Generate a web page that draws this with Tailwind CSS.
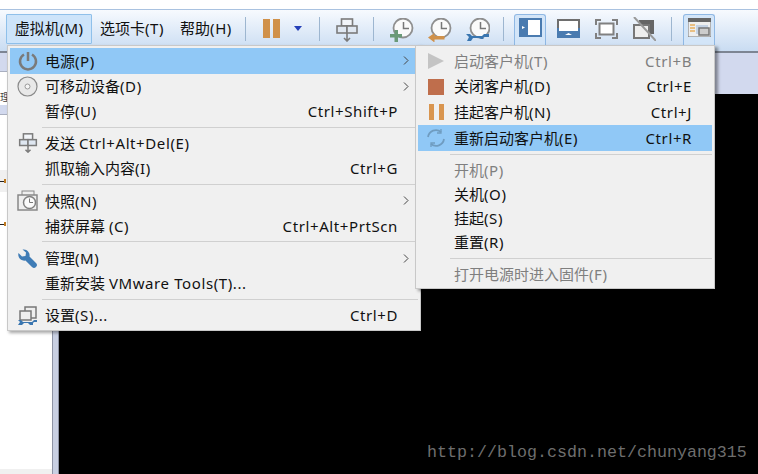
<!DOCTYPE html>
<html lang="zh-CN">
<head>
  <meta charset="UTF-8" />
  <title>VMware menu</title>
  <script src="https://cdn.jsdelivr.net/npm/@tailwindcss/browser@4"></script>
</head>
<body class="w-[758px] h-[474px] overflow-hidden bg-white font-['Noto_Sans','Noto_Sans_CJK_SC',sans-serif] text-[15px] text-[#111]">
<div class="relative w-[758px] h-[474px] flex flex-col">

  <!-- title strip -->
  <div class="h-[9px] bg-white border-b border-[#a9c2e0] box-content"></div>

  <!-- toolbar -->
  <div class="h-[43px] flex items-center pl-[6px] bg-gradient-to-b from-[#f7fafe] to-[#c9dcf2] border-b-2 border-[#7d8593]">
    <div class="h-[30px] w-[86px] flex items-center justify-center border border-[#8fc0ea] bg-[#cde4fa] rounded-[1px] mt-[-4px]"><span>虚拟机<span class="tracking-[.3px]">(M)</span></span></div>
    <div class="w-[80px] text-center mt-[-4px]">选项卡<span class="tracking-[.6px]">(T)</span></div>
    <div class="w-[68px] text-center mt-[-4px]">帮助<span class="tracking-[.6px]">(H)</span></div>
    <div class="w-px h-[24px] bg-[#9db6d0] mt-[-4px] ml-[5px]"></div>
    <div class="flex gap-[3px] ml-[17px] mt-[-4px]">
      <div class="w-[7px] h-[19px] bg-[#d0914a]"></div>
      <div class="w-[7px] h-[19px] bg-[#d0914a]"></div>
    </div>
    <svg class="ml-[14px] mt-[-4px]" width="8" height="5" viewBox="0 0 8 5"><path d="M0 0h8L4 5z" fill="#2540b8"/></svg>
    <div class="w-px h-[24px] bg-[#9db6d0] mt-[-4px] ml-[17px]"></div>
    <svg class="ml-[16px] mt-[-1px]" width="22" height="24" viewBox="0 0 22 24" fill="#f2f5f9" stroke="#7b7b7b" stroke-width="1.600"><rect x="5.500" y="1" width="11" height="7"/><rect x="1" y="8" width="10" height="7" fill="#dfe7f1"/><rect x="11" y="8" width="10" height="7" fill="#dfe7f1"/><path d="M11 15v8M8 20l3 3 3-3" fill="none"/></svg>
    <div class="w-px h-[24px] bg-[#9db6d0] mt-[-4px] ml-[15px]"></div>
    <div class="flex gap-[14px] ml-[16px] mt-[-1px]">
      <svg width="24" height="24" viewBox="0 0 24 24"><circle cx="13" cy="10" r="9.500" fill="#fafafa" stroke="#8f8f8f" stroke-width="1.800"/><path d="M13.500 4v6.500H19" fill="none" stroke="#777" stroke-width="1.500"/><path d="M4.500 12h3.500v4h4v3.500H8v4.500H4.500v-4.500H0V16h4.500z" fill="#6a9a78"/></svg>
      <svg width="24" height="24" viewBox="0 0 24 24"><circle cx="13" cy="10" r="9.500" fill="#fafafa" stroke="#8f8f8f" stroke-width="1.800"/><path d="M13.500 4v6.500H19" fill="none" stroke="#777" stroke-width="1.500"/><path d="M0 19.500l6.500-4.500v3h10v3.500h-10v3z" fill="#d0914a"/></svg>
      <svg width="24" height="24" viewBox="0 0 24 24"><circle cx="14" cy="10" r="9.500" fill="#fafafa" stroke="#8f8f8f" stroke-width="1.800"/><path d="M14.500 4v6.500H20" fill="none" stroke="#777" stroke-width="1.500"/><path d="M0 16h4l2 2h10l2-2h5v3h-5l-1 1 1 1h-3l-2-1H7l-2 3H1l2-4z" fill="#3a76b0"/></svg>
    </div>
    <div class="w-px h-[24px] bg-[#9db6d0] mt-[-4px] ml-[13px]"></div>
    <div class="h-[33px] w-[32px] ml-[10px] mt-[-1px] flex items-center justify-center border border-b-0 border-[#8fb8e4] rounded-t-[3px] bg-[#d3e5f8]">
      <svg class="mt-[-6px]" width="23" height="19" viewBox="0 0 23 19"><rect width="23" height="19" fill="#4a7bb0"/><rect x="9" y="2" width="12" height="15" fill="#fff"/><path d="M3 8l3 1.500-3 1.500z" fill="#fff"/></svg>
    </div>
    <div class="flex gap-[15px] ml-[11px] mt-[-4px] items-center">
      <svg width="23" height="19" viewBox="0 0 23 19"><rect width="23" height="19" fill="#6e6e6e"/><rect y="9" width="23" height="10" fill="#4a7bb0"/><rect x="2" y="2" width="19" height="10" fill="#fff"/><path d="M8 16l3.500-2 3.500 2z" fill="#fff"/></svg>
      <svg width="23" height="20" viewBox="0 0 23 20" fill="none" stroke="#808080"><rect x="4.500" y="4.500" width="14" height="11" fill="#fff" stroke-width="2"/><path d="M1 6V1h5M17 1h5v5M22 14v5h-5M6 19H1v-5" stroke-width="2"/></svg>
      <svg width="23" height="24" viewBox="0 0 23 24"><rect x="6" y="3" width="15" height="14" fill="#666"/><rect x="1" y="8" width="15" height="13" fill="#eee" stroke="#777" stroke-width="2"/><path d="M1 0l22 24" stroke="#999" stroke-width="2"/></svg>
    </div>
    <div class="w-px h-[24px] bg-[#9db6d0] mt-[-4px] ml-[15px]"></div>
    <div class="h-[33px] w-[32px] ml-[11px] mt-[-1px] flex items-center justify-center border border-b-0 border-[#8fb8e4] rounded-t-[3px] bg-[#d3e5f8]">
      <svg class="mt-[-6px]" width="23" height="19" viewBox="0 0 23 19"><rect width="23" height="19" fill="#eee" stroke="#777"/><rect width="23" height="4" fill="#666"/><path d="M2 7h5M2 10h5M2 13h5" stroke="#e8b060" stroke-width="1.500"/><rect x="8" y="7" width="12" height="9" fill="#c4d2e4"/><rect x="11" y="10" width="10" height="7" fill="#ccc" stroke="#777" stroke-width="1.500"/></svg>
    </div>
  </div>

  <!-- tabs strip and workspace -->
  <div class="flex-1 flex min-h-0">
    <div class="w-[52px] bg-white flex flex-col">
      <div class="h-[18px] bg-[#d2d9ee] border-b border-[#a9afc0] box-content"></div>
      <div class="h-[33px] flex items-end overflow-hidden"><span class="text-[10px] leading-[16px] text-[#444]">理器</span></div>
      <div class="h-[9px] bg-[#d2d9ee] border-b border-[#a9afc0] box-content"></div>
      <div class="mt-[55px] h-[22px] bg-[#f0f0f0] flex items-center"><div class="w-[4px] h-px bg-[#222]"></div><div class="w-[2px] h-[4px] bg-[#c07a20]"></div></div>
      <div class="mt-[21px] h-[22px] flex items-center"><div class="w-[4px] h-px bg-[#222]"></div><div class="w-[2px] h-[4px] bg-[#c07a20]"></div></div>
      <div class="mt-auto h-[5px] bg-[#f0f0f0]"></div>
    </div>
    <div class="w-[7px] bg-[#c8cfe2] border-l border-r border-[#8d93a5]"></div>
    <div class="flex-1 flex flex-col">
      <div class="h-[41px] bg-[#d2d9ee]"></div>
      <div class="flex-1 bg-black relative">
        <span class="absolute left-[368px] top-[351px] text-[#6e6e6e] text-[16.667px] leading-none font-['Liberation_Mono','Noto_Sans_CJK_SC',monospace] whitespace-nowrap">http://blog.csdn.net/chunyang315</span>
      </div>
    </div>
  </div>

  <!-- main menu -->
  <div class="absolute left-[7px] top-[45px] w-[414px] h-[286px] bg-[#f0f0f0] border border-[#c8c8c8] shadow-[2px_2px_3px_rgba(0,0,0,0.35)] p-[2px] flex flex-col">
    <div class="h-[26px] flex items-center bg-[#90c8f6]">
      <div class="w-[35px] flex justify-center"><svg width="20" height="20" viewBox="0 0 20 20" fill="none" stroke="#7a7a7a" stroke-width="2.500"><path d="M6 3.500a8 8 0 1 0 8 0M10 1v9"/></svg></div>
      <span class="flex-1">电源<span class="tracking-[.6px]">(P)</span></span>
      <svg class="mr-[9px]" width="6" height="9" viewBox="0 0 6 9" fill="none" stroke="#444"><path d="M1 .5l4 4-4 4"/></svg>
    </div>
    <div class="h-[25.500px] flex items-center">
      <div class="w-[35px] flex justify-center"><svg width="21" height="21" viewBox="0 0 21 21"><circle cx="10.500" cy="10.500" r="9.500" fill="#e8e8e8" stroke="#8a8a8a" stroke-width="1.200"/><circle cx="10.500" cy="10.500" r="2.500" fill="#f5f5f5" stroke="#999"/></svg></div>
      <span class="flex-1">可移动设备<span class="tracking-[.6px]">(D)</span></span>
      <svg class="mr-[9px]" width="6" height="9" viewBox="0 0 6 9" fill="none" stroke="#444"><path d="M1 .5l4 4-4 4"/></svg>
    </div>
    <div class="h-[25.500px] flex items-center">
      <div class="w-[35px]"></div>
      <span class="flex-1">暂停<span class="tracking-[.6px]">(U)</span></span>
      <span class="mr-[20px] tracking-[.6px]">Ctrl+Shift+P</span>
    </div>
    <div class="h-[7.500px] flex items-center pl-[32px]"><div class="w-full h-px bg-[#d0d0d0]"></div></div>
    <div class="h-[25.500px] flex items-center">
      <div class="w-[35px] flex justify-center"><svg width="20" height="20" viewBox="0 0 22 24" fill="#f2f5f9" stroke="#7b7b7b" stroke-width="1.800"><rect x="5.500" y="1" width="11" height="7"/><rect x="1" y="8" width="10" height="7" fill="#dfe7f1"/><rect x="11" y="8" width="10" height="7" fill="#dfe7f1"/><path d="M11 15v8M8 20l3 3 3-3" fill="none"/></svg></div>
      <span class="flex-1">发送 <span class="tracking-[.6px]">Ctrl+Alt+Del(E)</span></span>
    </div>
    <div class="h-[25.500px] flex items-center">
      <div class="w-[35px]"></div>
      <span class="flex-1">抓取输入内容<span class="tracking-[.6px]">(I)</span></span>
      <span class="mr-[20px] tracking-[.6px]">Ctrl+G</span>
    </div>
    <div class="h-[7.500px] flex items-center pl-[32px]"><div class="w-full h-px bg-[#d0d0d0]"></div></div>
    <div class="h-[25.500px] flex items-center">
      <div class="w-[35px] flex justify-center"><svg width="21" height="21" viewBox="0 0 21 21"><rect x="5" y="1" width="12" height="6" fill="#eee" stroke="#888"/><rect x="1" y="5" width="19" height="15" fill="#eee" stroke="#888" stroke-width="1.500"/><circle cx="12.500" cy="12.500" r="6" fill="#fafafa" stroke="#808080" stroke-width="1.500"/><path d="M12.500 8.500v4h3.500" fill="none" stroke="#777"/></svg></div>
      <span class="flex-1">快照<span class="tracking-[.6px]">(N)</span></span>
      <svg class="mr-[9px]" width="6" height="9" viewBox="0 0 6 9" fill="none" stroke="#444"><path d="M1 .5l4 4-4 4"/></svg>
    </div>
    <div class="h-[25.500px] flex items-center">
      <div class="w-[35px]"></div>
      <span class="flex-1">捕获屏幕 <span class="tracking-[.6px]">(C)</span></span>
      <span class="mr-[20px] tracking-[.6px]">Ctrl+Alt+PrtScn</span>
    </div>
    <div class="h-[7.500px] flex items-center pl-[32px]"><div class="w-full h-px bg-[#d0d0d0]"></div></div>
    <div class="h-[25.500px] flex items-center">
      <div class="w-[35px] flex justify-center"><svg width="19" height="19" viewBox="0 0 19 19"><path d="M0.500 4 L4 7.500 L7.500 7 L8 3.500 L4.500 0.500 A6 6 0 0 1 11.500 7.500 L18 14 A2.800 2.800 0 0 1 14 18 L7.500 11.500 A6 6 0 0 1 0.500 4z" fill="#3f7cb6"/></svg></div>
      <span class="flex-1">管理<span class="tracking-[.6px]">(M)</span></span>
      <svg class="mr-[9px]" width="6" height="9" viewBox="0 0 6 9" fill="none" stroke="#444"><path d="M1 .5l4 4-4 4"/></svg>
    </div>
    <div class="h-[25.500px] flex items-center">
      <div class="w-[35px]"></div>
      <span class="flex-1">重新安装 <span class="tracking-[.6px]">VMware Tools(T)...</span></span>
    </div>
    <div class="h-[7.500px] flex items-center pl-[32px]"><div class="w-full h-px bg-[#d0d0d0]"></div></div>
    <div class="h-[25.500px] flex items-center">
      <div class="w-[35px] flex justify-center"><svg width="21" height="20" viewBox="0 0 21 20"><rect x="8" y="1" width="11" height="11" fill="#eee" stroke="#777" stroke-width="1.500"/><rect x="3" y="5" width="11" height="9" fill="#eee" stroke="#777" stroke-width="1.500"/><path d="M1 14h3l2 2h9l2-2h3v2h-3l-1 1v2h-3l-2-2H7l-2 2H1l2-3z" fill="#3a76b0"/></svg></div>
      <span class="flex-1">设置<span class="tracking-[.6px]">(S)...</span></span>
      <span class="mr-[20px] tracking-[.6px]">Ctrl+D</span>
    </div>
  </div>

  <!-- power submenu -->
  <div class="absolute left-[415px] top-[45px] w-[300px] h-[244px] bg-[#f0f0f0] border border-[#c8c8c8] shadow-[3px_2px_3px_rgba(0,0,0,0.4)] p-[2px] flex flex-col">
    <div class="h-[26px] flex items-center text-[#7f7f7f]">
      <div class="w-[36px] flex justify-center"><svg width="16" height="16" viewBox="0 0 16 16"><path d="M0 0l16 8-16 8z" fill="#c4c4c4"/></svg></div>
      <span class="flex-1">启动客户机<span class="tracking-[.6px]">(T)</span></span>
      <span class="mr-[20px] tracking-[.6px]">Ctrl+B</span>
    </div>
    <div class="h-[26px] flex items-center">
      <div class="w-[36px] flex justify-center"><div class="w-[16px] h-[16px] bg-[#bf6e4c]"></div></div>
      <span class="flex-1">关闭客户机<span class="tracking-[.6px]">(D)</span></span>
      <span class="mr-[20px] tracking-[.6px]">Ctrl+E</span>
    </div>
    <div class="h-[26px] flex items-center">
      <div class="w-[36px] flex justify-center gap-[5px]"><div class="w-[5px] h-[16px] bg-[#d9954f]"></div><div class="w-[5px] h-[16px] bg-[#d9954f]"></div></div>
      <span class="flex-1">挂起客户机<span class="tracking-[.6px]">(N)</span></span>
      <span class="mr-[20px] tracking-[.6px]">Ctrl+J</span>
    </div>
    <div class="h-[26px] flex items-center bg-[#90c8f6]">
      <div class="w-[36px] flex justify-center"><svg width="20" height="20" viewBox="0 0 20 20" fill="none" stroke="#6f9cc0" stroke-width="1.800"><path d="M2 9a8 8 0 0 1 13-5M18 11a8 8 0 0 1-13 5"/><path d="M15 1v4h-4M5 19v-4h4" stroke-width="1.300"/></svg></div>
      <span class="flex-1">重新启动客户机<span class="tracking-[.6px]">(E)</span></span>
      <span class="mr-[20px] tracking-[.6px]">Ctrl+R</span>
    </div>
    <div class="h-[7px] flex items-center pl-[32px]"><div class="w-full h-px bg-[#d0d0d0]"></div></div>
    <div class="h-[24.500px] flex items-center pl-[36px] text-[#7f7f7f]"><span>开机<span class="tracking-[.6px]">(P)</span></span></div>
    <div class="h-[24.500px] flex items-center pl-[36px]"><span>关机<span class="tracking-[.6px]">(O)</span></span></div>
    <div class="h-[24.500px] flex items-center pl-[36px]"><span>挂起<span class="tracking-[.6px]">(S)</span></span></div>
    <div class="h-[24.500px] flex items-center pl-[36px]"><span>重置<span class="tracking-[.6px]">(R)</span></span></div>
    <div class="h-[7px] flex items-center pl-[32px]"><div class="w-full h-px bg-[#d0d0d0]"></div></div>
    <div class="h-[24.500px] flex items-center pl-[36px] text-[#7f7f7f]"><span>打开电源时进入固件<span class="tracking-[.6px]">(F)</span></span></div>
  </div>
</div>
</body>
</html>
